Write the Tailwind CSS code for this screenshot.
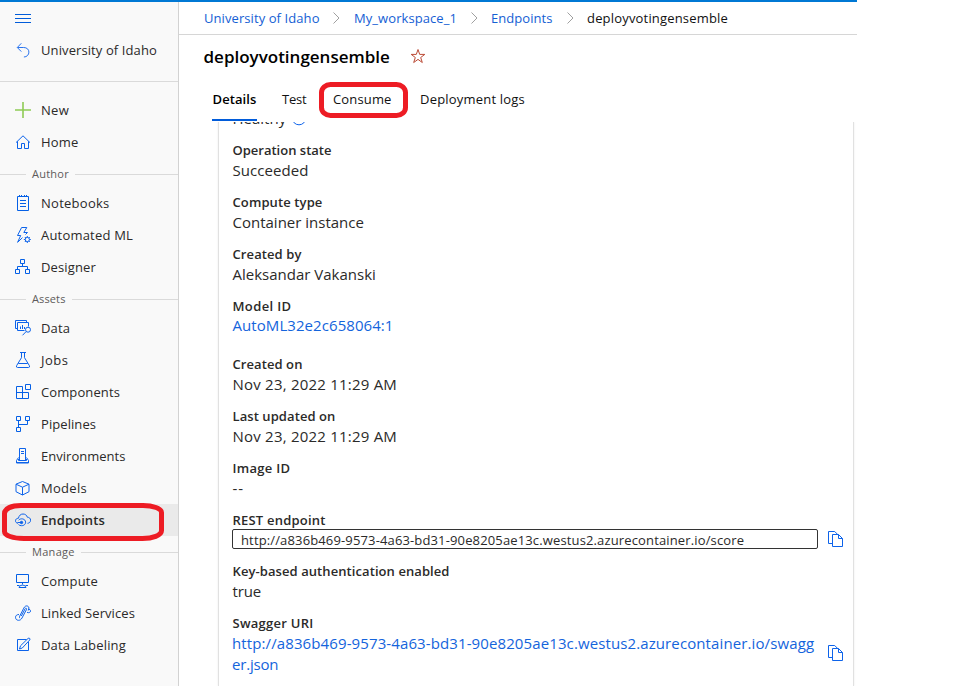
<!DOCTYPE html>
<html lang="en">
<head>
<meta charset="utf-8">
<title>deployvotingensemble</title>
<script src="https://cdn.jsdelivr.net/npm/@tailwindcss/browser@4"></script>
</head>
<body class="relative flex h-[686px] w-[960px] flex-col overflow-hidden bg-white font-['Open_Sans','Liberation_Sans',sans-serif] text-[13px] text-[#2b2a29]">
<div class="h-[2px] w-[857px] shrink-0 bg-[#0078d4]"></div>
<div class="flex min-h-0 w-[857px] flex-1">

  <!-- Side navigation -->
  <nav class="flex w-[179px] shrink-0 flex-col border-r border-[#d2d2d2] bg-[#f9f9f9]">
    <div class="flex h-8 items-center pl-[15px]">
      <svg class="size-4" viewBox="0 0 16 16" fill="none" stroke="#015cda"><path d="M0 4.500h16M0 8.500h16M0 12.500h16"/></svg>
    </div>
    <a class="flex h-8 items-center gap-[10px] pl-[15px]">
      <svg class="size-4" viewBox="0 0 16 16" fill="none" stroke="#2a74ee"><path d="M6.300 1.300L2.300 5.500l4 4.100M2.500 5.500h6.200c3.200 0 5.200 2 5.200 4.600s-2 4.900-5 4.900"/></svg>
      <span class="pt-[2px] tracking-[0.1px]">University of Idaho</span>
    </a>
    <div class="mt-[15px] mb-3 h-px bg-[#dadada]"></div>
    <a class="flex h-8 items-center gap-[10px] pl-[15px]">
      <svg class="size-4" viewBox="0 0 16 16" fill="none" stroke="#8fcb55" stroke-width="1.600"><path d="M0 8h16M8 0v16"/></svg>
      <span class="pt-[2px] tracking-[0.28px]">New</span>
    </a>
    <a class="flex h-8 items-center gap-[10px] pl-[15px]">
      <svg class="size-4" viewBox="0 0 16 16" fill="none" stroke="#0d63ea"><path d="M1 8.600L8 1.800l7 6.800M2.500 7.300v7.200h4V9.500h3v5h4V7.300"/></svg>
      <span class="pt-[2px] tracking-[0.19px]">Home</span>
    </a>

    <div class="flex h-[29px] items-center text-[11px] text-[#5d5b59]">
      <span class="mt-[3px] h-px w-[26px] bg-[#dadada]"></span><span class="ml-[6px] pt-[3px] tracking-[0.25px]">Author</span><span class="mt-[3px] ml-[6px] h-px flex-1 bg-[#dadada]"></span>
    </div>
    <a class="flex h-8 items-center gap-[10px] pl-[15px]">
      <svg class="size-4" viewBox="0 0 16 16" fill="none" stroke="#0560e6"><path d="M2.500 1.500h11v14h-11zM4.500 0v2M6.500 0v2M9.500 0v2M11.500 0v2M5 5.500h6M5 8.500h6M5 11.500h6"/></svg>
      <span class="pt-[2px] tracking-[0.26px]">Notebooks</span>
    </a>
    <a class="flex h-8 items-center gap-[10px] pl-[15px]">
      <svg class="size-4" viewBox="0 0 16 16" fill="none" stroke="#0d63ea"><path d="M6.600 .5h5.200L8.800 5.500h3.700l-2 2M6.600 .5L2.500 8.500h3.200L2.600 15.300l4.900-4.700"/><circle cx="12.300" cy="12.500" r="2.100"/><path d="M12.300 9v1.400M12.300 14.600V16M8.800 12.500h1.400M14.400 12.500h1.400M9.800 10l1 1M13.800 14l1 1M9.800 15l1-1M13.800 11l1-1"/></svg>
      <span class="pt-[2px] tracking-[0.2px]">Automated ML</span>
    </a>
    <a class="flex h-8 items-center gap-[10px] pl-[15px]">
      <svg class="size-4" viewBox="0 0 16 16" fill="none" stroke="#0560e6"><path d="M5.500 .5h4v4h-4zM.5 10.500h4v4h-4zM10.500 10.500h4v4h-4zM7.500 4.500v3M2.500 10.500v-3h10v3"/></svg>
      <span class="pt-[2px] tracking-[0.14px]">Designer</span>
    </a>

    <div class="flex h-[29px] items-center text-[11px] text-[#5d5b59]">
      <span class="mt-[3px] h-px w-[26px] bg-[#dadada]"></span><span class="ml-[6px] pt-[3px] tracking-[0.12px]">Assets</span><span class="mt-[3px] ml-[6px] h-px flex-1 bg-[#dadada]"></span>
    </div>
    <a class="flex h-8 items-center gap-[10px] pl-[15px]">
      <svg class="size-4" viewBox="0 0 16 16" fill="none" stroke="#0d63ea"><path d="M2.500 8.500h-2v-8h11v2M9.500 10.500h-7v-8h11v4M5.500 9V6.500M7.500 9V5M9.500 9V7"/><circle cx="13" cy="9.700" r="2.500"/><path d="M11.200 11.500L7.500 15.300"/></svg>
      <span class="pt-[2px] tracking-[0.12px]">Data</span>
    </a>
    <a class="flex h-8 items-center gap-[10px] pl-[15px]">
      <svg class="size-4" viewBox="0 0 16 16" fill="none" stroke="#0d63ea"><path d="M5 .5h6M6.500 .5v5.200L1.700 13.500q-.9 2 .8 2h11q1.700 0 .8-2L9.500 5.700V.5M3.300 11.500h9.400"/></svg>
      <span class="pt-[2px] tracking-[0.500px]">Jobs</span>
    </a>
    <a class="flex h-8 items-center gap-[10px] pl-[15px]">
      <svg class="size-4" viewBox="0 0 16 16" fill="none" stroke="#0560e6"><path d="M7.500 2.500h-6v12h12v-6h-12M7.500 2.500v12M10.500 .5h5v5h-5z"/></svg>
      <span class="pt-[2px] tracking-[0.11px]">Components</span>
    </a>
    <a class="flex h-8 items-center gap-[10px] pl-[15px]">
      <svg class="size-4" viewBox="0 0 16 16" fill="none" stroke="#0560e6"><path d="M1.500 .5h4v4h-4zM10.500 .5h4v4h-4zM1.500 11.500h4v4h-4zM3.500 4.500v7M3.500 8.500h9v-4"/></svg>
      <span class="pt-[2px] tracking-[0.07px]">Pipelines</span>
    </a>
    <a class="flex h-8 items-center gap-[10px] pl-[15px]">
      <svg class="size-4" viewBox="0 0 16 16" fill="none" stroke="#0d63ea"><path d="M4.500 12.500V.5h6v12M6 3.500h3M6 5.500h3M3.500 11v1.500h8V11M3.500 9.500L1.500 12.500v2.500h12v-2.500l-2-3M1.500 14.500h12"/></svg>
      <span class="pt-[2px] tracking-[0.02px]">Environments</span>
    </a>
    <a class="flex h-8 items-center gap-[10px] pl-[15px]">
      <svg class="size-4" viewBox="0 0 16 16" fill="none" stroke="#0d63ea"><path d="M7.500 1.500l6.500 2.700v7.500l-6.500 3.300L1 11.700V4.200zM1 4.200l6.500 3 6.500-3M7.500 7.200V15"/></svg>
      <span class="pt-[2px] tracking-[0.29px]">Models</span>
    </a>
    <a class="flex h-8 items-center gap-[10px] bg-[#eaeaea] pl-[15px] font-semibold">
      <svg class="size-4" viewBox="0 0 16 16" fill="none" stroke="#0d63ea"><path d="M3 11.300C1.200 11 .5 10 .5 8.800c0-1.500 1.200-2.600 2.900-2.500C4 3.500 5.700 2 8 2c2.200 0 3.800 1.200 4.300 3.200 2.100.1 3.300 1.300 3.300 3 0 1.800-1.300 3-3.100 3.100"/><path d="M3.600 8.300c1-1.600 4.300-2.200 6.200-.2 1.900 2.300.4 5.600-3.300 5.600-1.300 0-2.300-.4-3-1.200M2.500 10.500h4"/><circle cx="6.500" cy="10.500" r="1.200" fill="#0d63ea"/></svg>
      <span class="pt-[2px] tracking-[0.1px]">Endpoints</span>
    </a>

    <div class="flex h-[29px] items-center text-[11px] text-[#5d5b59]">
      <span class="mt-[3px] h-px w-[26px] bg-[#dadada]"></span><span class="ml-[6px] pt-[3px] tracking-[0.3px]">Manage</span><span class="mt-[3px] ml-[6px] h-px flex-1 bg-[#dadada]"></span>
    </div>
    <a class="flex h-8 items-center gap-[10px] pl-[15px]">
      <svg class="size-4" viewBox="0 0 16 16" fill="none" stroke="#0560e6"><path d="M1.500 1.500h12v8h-12zM7.500 9.500v2M4 14.500c0-1.200 1.600-2.300 3.500-2.300s3.500 1.100 3.500 2.300zM2 12.500h2.500M10.500 12.500H13"/></svg>
      <span class="pt-[2px] tracking-[0.16px]">Compute</span>
    </a>
    <a class="flex h-8 items-center gap-[10px] pl-[15px]">
      <svg class="size-4" viewBox="0 0 16 16" fill="none" stroke="#0d63ea"><path d="M4 9.500C1.800 9.500.5 10.700.5 12.300c0 1.700 1.200 3 3 3 1.600 0 2.700-.8 3.500-2.300l4.600-8.700c.4-1-.9-1.600-1.400-.7L6.300 11M12 7.300c2 .8 3.300.3 3.500-1.200.1-1.300-1-2-2.500-1.800M13.200 5.500c1-2 1-3.600-.4-4.300-1.500-.8-3 0-4 1.900L4.800 11c-.6 1.200-.3 2 .3 2.300"/></svg>
      <span class="pt-[2px] tracking-[0.08px]">Linked Services</span>
    </a>
    <a class="flex h-8 items-center gap-[10px] pl-[15px]">
      <svg class="size-4" viewBox="0 0 16 16" fill="none" stroke="#0d63ea"><path d="M11.500 2.500h-9v11h11V5M4.500 12l1-3.200 7.600-7.400c1.200-.9 2.500.4 1.600 1.600L7.300 11z"/></svg>
      <span class="pt-[2px] tracking-[0.17px]">Data Labeling</span>
    </a>
  </nav>

  <!-- Main pane -->
  <main class="flex min-w-0 flex-1 flex-col">
    <div class="flex h-[33px] shrink-0 items-center border-b border-[#d6d6d6] pl-[25px] text-[#1560d4]">
      <span class="w-[116px] pt-[2px] whitespace-nowrap tracking-[0.08px]">University of Idaho</span>
      <svg class="mr-[14px] ml-[12px] h-3 w-2" viewBox="0 0 8 12" fill="none" stroke="#a0a0a0"><path d="M1.500 .5L7 6l-5.500 5.500"/></svg>
      <span class="w-[103px] pt-[2px] whitespace-nowrap tracking-[0.07px]">My_workspace_1</span>
      <svg class="mr-[13px] ml-[13px] h-3 w-2" viewBox="0 0 8 12" fill="none" stroke="#a0a0a0"><path d="M1.500 .5L7 6l-5.500 5.500"/></svg>
      <span class="w-[62px] pt-[2px] whitespace-nowrap tracking-[0.05px]">Endpoints</span>
      <svg class="mr-[13px] ml-[13px] h-3 w-2" viewBox="0 0 8 12" fill="none" stroke="#a0a0a0"><path d="M1.500 .5L7 6l-5.500 5.500"/></svg>
      <span class="pt-[2px] whitespace-nowrap tracking-[0.18px] text-[#111]">deployvotingensemble</span>
    </div>

    <div class="flex h-[43px] shrink-0 items-center pl-[24.5px]">
      <h1 class="w-[187px] text-[17px] leading-6 font-semibold whitespace-nowrap text-black">deployvotingensemble</h1>
      <svg class="mb-px ml-[19.5px] size-4" viewBox="0 0 16 16" fill="none" stroke="#bb4a35"><path d="M8 1.500l1.700 4.900h5.100l-4.100 3.100 1.600 5L8 11.400l-4.300 3.100 1.600-5L1.200 6.400h5.100z"/></svg>
    </div>

    <div class="flex h-[44px] shrink-0 items-stretch pl-[33px] whitespace-nowrap text-[#111]">
      <div class="flex h-[43px] w-[45px] items-center justify-center border-b-2 border-[#015cda] font-semibold text-black"><span class="pt-[2px] tracking-[0.1px]">Details</span></div>
      <div class="ml-[25px] flex h-[43px] w-[51px] items-center"><span class="tracking-[-0.2px]">Test</span></div>
      <div class="flex h-[43px] w-[87px] items-center"><span class="tracking-[0.15px]">Consume</span></div>
      <div class="flex h-[43px] items-center"><span class="tracking-[0.2px]">Deployment logs</span></div>
    </div>

    <!-- Scrolling attributes card -->
    <div class="min-h-0 flex-1 overflow-hidden pl-[39px]">
      <div class="flow-root h-full w-[636px] border-x border-[#e1e1e1] pl-[13.5px] shadow-[0_0_2px_rgba(0,0,0,0.08)]">
        <div class="-mt-[15px] flex h-[33px] items-start">
          <span class="text-[15px] leading-[22px]">Healthy</span>
          <svg class="mt-[3px] ml-[5px] size-4" viewBox="0 0 16 16" fill="none" stroke="#0d63ea"><circle cx="8" cy="8" r="6.800"/><path d="M8 7v4.500M8 4.500v1"/></svg>
        </div>
        <dl>
          <div class="h-[52px]"><dt class="leading-5 font-semibold">Operation state</dt><dd class="text-[15px] leading-[20px] tracking-[0.06px]">Succeeded</dd></div>
          <div class="h-[52px]"><dt class="leading-5 font-semibold tracking-[0.11px]">Compute type</dt><dd class="text-[15px] leading-[20px]">Container instance</dd></div>
          <div class="h-[52px]"><dt class="leading-5 font-semibold tracking-[0.1px]">Created by</dt><dd class="text-[15px] leading-[20px]">Aleksandar Vakanski</dd></div>
          <div class="h-[58px]"><dt class="leading-5 font-semibold tracking-[0.38px]">Model ID</dt><dd class="text-[15px] leading-[18px] tracking-[0.07px] text-[#1464dc]">AutoML32e2c658064:1</dd></div>
          <div class="h-[52px]"><dt class="leading-5 font-semibold tracking-[0.08px]">Created on</dt><dd class="text-[15px] leading-[20px] tracking-[0.22px]">Nov 23, 2022 11:29 AM</dd></div>
          <div class="h-[52px]"><dt class="leading-5 font-semibold tracking-[0.08px]">Last updated on</dt><dd class="text-[15px] leading-[20px] tracking-[0.22px]">Nov 23, 2022 11:29 AM</dd></div>
          <div class="h-[52px]"><dt class="leading-5 font-semibold tracking-[0.31px]">Image ID</dt><dd class="text-[15px] leading-[20px] tracking-[1px]">--</dd></div>
          <div class="h-[51px]">
            <dt class="h-[19px] leading-5 font-semibold tracking-[0.21px]">REST endpoint</dt>
            <dd class="-ml-[0.5px] flex items-start">
              <div class="flex h-5 w-[586px] items-center overflow-hidden rounded-[2px] border border-[#333] pl-2 tracking-[0.14px] whitespace-nowrap"><span class="pt-[3px]">http://a836b469-9573-4a63-bd31-90e8205ae13c.westus2.azurecontainer.io/score</span></div>
              <svg class="mt-[2px] ml-[10px] size-4" viewBox="0 0 16 16" fill="none" stroke="#0d63ea"><path d="M4.500 12.500h-4V.5h6.200l3 3M4.500 3.500h6l4 4v8h-10zM10.500 3.500v4h4"/></svg>
            </dd>
          </div>
          <div class="h-[52px]"><dt class="leading-5 font-semibold tracking-[0.08px]">Key-based authentication enabled</dt><dd class="text-[15px] leading-[20px] tracking-[-0.15px]">true</dd></div>
          <div>
            <dt class="leading-5 font-semibold tracking-[0.26px]">Swagger URI</dt>
            <dd class="-ml-[0.5px] flex items-start">
              <div class="w-[586px] text-[15px] leading-[21px] tracking-[0.11px] whitespace-nowrap text-[#1464dc]">http://a836b469-9573-4a63-bd31-90e8205ae13c.westus2.azurecontainer.io/swagg<br><span class="tracking-[-0.2px]">er.json</span></div>
              <svg class="mt-[12px] ml-[10px] size-4" viewBox="0 0 16 16" fill="none" stroke="#0d63ea"><path d="M4.500 12.500h-4V.5h6.200l3 3M4.500 3.500h6l4 4v8h-10zM10.500 3.500v4h4"/></svg>
            </dd>
          </div>
        </dl>
      </div>
    </div>
  </main>
</div>

<!-- Hand-drawn highlight outlines -->
<svg class="pointer-events-none absolute inset-0 h-[686px] w-[960px]" viewBox="0 0 960 686" fill="none" stroke="#ed1c24" stroke-width="5">
  <rect x="321.500" y="84.500" width="84" height="31" rx="9" ry="8"/>
  <path d="M21 505.500h122c10 0 18.500 3 18.500 7v18c0 5-9 8-19 8H24c-11 0-19.500-3-19.500-7v-18c0-5 7-8 16.500-8z"/>
</svg>
</body>
</html>
